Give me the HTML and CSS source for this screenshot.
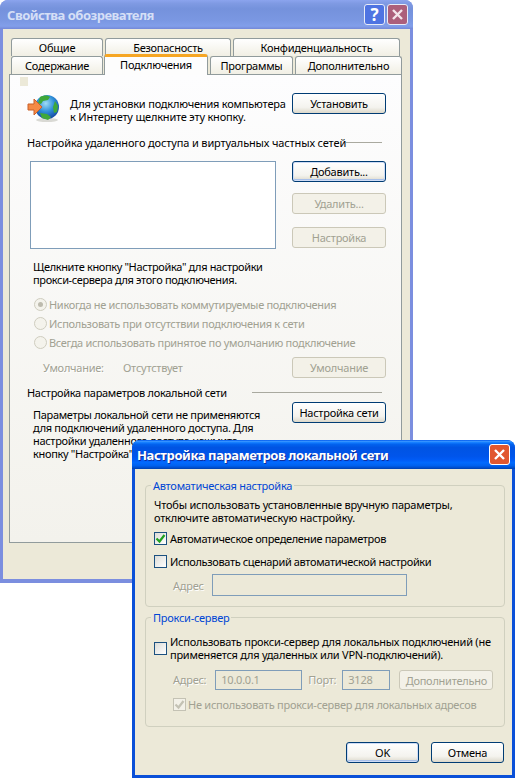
FILE: index.html
```html
<!DOCTYPE html>
<html lang="ru">
<head>
  <meta charset="UTF-8">
  <title>Свойства обозревателя</title>
  <link rel="stylesheet" href="styles.css">
</head>
<body>

<!-- Задний диалог -->
<div class="window back-window">
  <div class="titlebar">
    <span class="title">Свойства обозревателя</span>
    <span class="cap-btn cap-help">?</span>
    <span class="cap-btn cap-close">
      <svg width="13" height="13" viewBox="0 0 13 13"><path d="M2 2l9 9M11 2l-9 9" stroke="#f3e4ea" stroke-width="2.4"/></svg>
    </span>
  </div>
  <div class="back-body">
    <div class="tab-row">
      <div class="tab w-92">Общие</div>
      <div class="tab w-126">Безопасность</div>
      <div class="tab w-167">Конфиденциальность</div>
    </div>
    <div class="tab-row tab-row-front">
      <div class="tab w-92">Содержание</div>
      <div class="tab tab-active">Подключения</div>
      <div class="tab w-83">Программы</div>
      <div class="tab w-107">Дополнительно</div>
    </div>
    <div class="page">
      <span class="page-mark"></span>

      <div class="row install-row">
        <svg class="globe" width="33" height="28" viewBox="0 0 33 28">
          <defs>
            <radialGradient id="sea" cx="45%" cy="35%" r="70%">
              <stop offset="0" stop-color="#9fdcf5"/>
              <stop offset="0.5" stop-color="#2f8fd8"/>
              <stop offset="1" stop-color="#123f9c"/>
            </radialGradient>
          </defs>
          <ellipse cx="20" cy="26" rx="11" ry="2" fill="#d9d9d4"/>
          <circle cx="20" cy="13" r="12" fill="url(#sea)"/>
          <path d="M13 3c4-2 8-2 10 0l-2 3-5 1-2 3-3-1zM28 7l3 5-1 6-3 1-1-6zM13 19l7 1 4 3-3 3-6-2z" fill="#3fa83a"/>
          <path d="M1 10h6V5l8 8-8 8v-5H1z" fill="#f58a45" stroke="#c9602a"/>
        </svg>
        <p class="install-text">Для установки подключения компьютера<br>к Интернету щелкните эту кнопку.</p>
        <button class="btn btn-main">Установить</button>
      </div>

      <div class="heading heading-dial"><span>Настройка удаленного доступа и виртуальных частных сетей</span><i></i></div>

      <div class="row dial-row">
        <div class="listbox"></div>
        <div class="btn-col">
          <button class="btn btn-default">Добавить...</button>
          <button class="btn btn-off">Удалить...</button>
          <button class="btn btn-off">Настройка</button>
        </div>
      </div>

      <p class="hint">Щелкните кнопку "Настройка" для настройки<br>прокси-сервера для этого подключения.</p>

      <div class="radio-row radio-first"><span class="radio radio-on"></span>Никогда не использовать коммутируемые подключения</div>
      <div class="radio-row"><span class="radio"></span>Использовать при отсутствии подключения к сети</div>
      <div class="radio-row"><span class="radio"></span>Всегда использовать принятое по умолчанию подключение</div>

      <div class="row default-row">
        <span class="off-label">Умолчание:</span>
        <span class="off-value">Отсутствует</span>
        <button class="btn btn-off">Умолчание</button>
      </div>

      <div class="heading heading-lan"><span>Настройка параметров локальной сети</span><i></i></div>

      <div class="row lan-row">
        <p class="lan-text">Параметры локальной сети не применяются<br>для подключений удаленного доступа. Для<br>настройки удаленного доступа нажмите<br>кнопку "Настройка" выше.</p>
        <button class="btn btn-main">Настройка сети</button>
      </div>
    </div>
  </div>
</div>

<!-- Передний диалог -->
<div class="window front-window">
  <div class="titlebar">
    <span class="title">Настройка параметров локальной сети</span>
    <span class="cap-btn cap-close">
      <svg width="13" height="13" viewBox="0 0 13 13"><path d="M2 2l9 9M11 2l-9 9" stroke="#fff" stroke-width="2.4"/></svg>
    </span>
  </div>
  <div class="front-body">
    <fieldset class="group group-auto">
      <legend>Автоматическая настройка</legend>
      <p class="group-text">Чтобы использовать установленные вручную параметры,<br>отключите автоматическую настройку.</p>
      <div class="check-row check-first">
        <span class="check">
          <svg width="11" height="11" viewBox="0 0 11 11"><path d="M1.5 5.5l3 3 5-6.5" fill="none" stroke="#21a121" stroke-width="2.2"/></svg>
        </span>Автоматическое определение параметров
      </div>
      <div class="check-row check-second"><span class="check"></span>Использовать сценарий автоматической настройки</div>
      <div class="address-row">
        <span class="off-label">Адрес</span>
        <span class="field field-address"></span>
      </div>
    </fieldset>

    <fieldset class="group group-proxy">
      <legend>Прокси-сервер</legend>
      <div class="check-row proxy-check">
        <span class="check"></span>
        <span>Использовать прокси-сервер для локальных подключений (не<br>применяется для удаленных или VPN-подключений).</span>
      </div>
      <div class="proxy-row">
        <span class="off-label">Адрес:</span>
        <span class="field field-host">10.0.0.1</span>
        <span class="off-label">Порт:</span>
        <span class="field field-port">3128</span>
        <button class="btn btn-off btn-more">Дополнительно</button>
      </div>
      <div class="check-row bypass-row">
        <span class="check check-off">
          <svg width="11" height="11" viewBox="0 0 11 11"><path d="M1.5 5.5l3 3 5-6.5" fill="none" stroke="#c4c2b4" stroke-width="2.2"/></svg>
        </span>Не использовать прокси-сервер для локальных адресов
      </div>
    </fieldset>

    <div class="actions">
      <button class="btn btn-default btn-ok">OK</button>
      <button class="btn btn-main btn-ok">Отмена</button>
    </div>
  </div>
</div>

</body>
</html>
```

FILE: styles.css
```css
body {
  margin: 0;
  width: 516px;
  height: 779px;
  overflow: hidden;
  background: #fff;
  position: relative;
  font-family: "Noto Sans", Tahoma, sans-serif;
  font-size: 11px;
  line-height: 13px;
  letter-spacing: -0.25px;
  white-space: nowrap;
  color: #000;
}

p {
  margin: 0;
}

/* Окна */
.window {
  position: absolute;
  box-sizing: border-box;
  border-radius: 8px 8px 0 0;
  display: flex;
  flex-direction: column;
}

.back-window {
  left: 0;
  top: 0;
  width: 413px;
  height: 583px;
  background: #7b8edf;
}

.front-window {
  left: 132px;
  top: 440px;
  width: 383px;
  height: 338px;
  background: #0a50d8;
}

.titlebar {
  display: flex;
  align-items: center;
  gap: 2px;
  flex: none;
  height: 29px;
  padding: 0 5px 0 7px;
  border-radius: 8px 8px 0 0;
  box-sizing: border-box;
}

.back-window .titlebar {
  background: linear-gradient(#8ba4ee 0, #7f9ae3 12%, #7592dc 30%, #7a97e2 70%, #829fea 90%, #7388d8 100%);
}

.front-window .titlebar {
  background: linear-gradient(#0058ee 0, #3593ff 5%, #127dff 9%, #0262ee 15%, #0054e3 26%, #0055eb 56%, #005bf5 68%, #026afe 78%, #0062ef 88%, #0052d6 94%, #0040ab 100%);
  padding: 2px 5px 0 5px;
}

.title {
  flex: 1;
  font-size: 13px;
  font-weight: bold;
  letter-spacing: -0.4px;
}

.back-window .title {
  color: #d5dff6;
  letter-spacing: -0.5px;
  padding-top: 2px;
}

.front-window .title {
  color: #fff;
  text-shadow: 1px 1px 0 #0f2f9c;
}

.cap-btn {
  width: 21px;
  height: 21px;
  box-sizing: border-box;
  border: 1px solid #e8ecf8;
  border-radius: 3px;
  display: flex;
  align-items: center;
  justify-content: center;
}

.cap-help {
  background: #4f74e2;
  color: #fff;
  font-size: 17px;
  font-weight: bold;
}

.back-window .cap-close {
  background: #ac5f7b;
}

.front-window .cap-close {
  background: #e1572f;
  border-color: #fff;
  margin-top: -3px;
}

.back-body {
  flex: 1;
  margin: 0 3px 4px;
  padding: 9px 8px 0 6px;
  background: #ece9d8;
}

/* Вкладки */
.tab-row {
  display: flex;
  gap: 2px;
  padding-left: 2px;
  height: 18px;
}

.tab-row-front {
  align-items: flex-end;
  gap: 1px;
  position: relative;
  z-index: 1;
}

.tab {
  box-sizing: border-box;
  height: 18px;
  border: 1px solid #919b9c;
  border-bottom: 0;
  border-radius: 3px 3px 0 0;
  background: linear-gradient(#fff, #f1efe4);
  text-align: center;
  line-height: 18px;
}

.w-92 { width: 92px; }
.w-126 { width: 126px; }
.w-167 { width: 167px; }
.w-83 { width: 83px; margin-left: 1px; }
.w-107 { width: 107px; margin-left: 1px; }

.tab-active {
  width: 104px;
  height: 21px;
  margin-bottom: -1px;
  border-top: 3px solid #f6a623;
  background: #fdfdfd;
  line-height: 15px;
}

.page {
  box-sizing: border-box;
  position: relative;
  height: 469px;
  border: 1px solid #919b9c;
  background: linear-gradient(#fdfdfe, #f3f2ec);
  padding: 18px 0 0 17px;
}

.page-mark {
  position: absolute;
  left: 10px;
  top: 2px;
  width: 8px;
  height: 9px;
  background: #ece9d8;
}

.row {
  display: flex;
}

.install-row {
  height: 26px;
}

.globe {
  flex: none;
  margin-top: 1px;
}

.install-text {
  flex: none;
  width: 222px;
  margin: 4px 0 0 10px;
  letter-spacing: -0.2px;
}

.heading {
  display: flex;
  align-items: center;
  height: 13px;
}

.heading i {
  height: 1px;
  background: #a9a99f;
}

.heading-dial {
  margin-top: 17px;
}

.heading-dial span {
  width: 319px;
  letter-spacing: -0.14px;
}

.heading-dial i {
  width: 36px;
}

.heading-lan {
  margin-top: 8px;
}

.heading-lan span {
  width: 225px;
  letter-spacing: -0.3px;
}

.heading-lan i {
  width: 130px;
}

.dial-row {
  margin: 12px 0 0 3px;
  height: 88px;
}

.listbox {
  width: 246px;
  height: 88px;
  box-sizing: border-box;
  border: 1px solid #7f9db9;
  background: #fff;
}

.btn-col {
  margin: 0 0 0 16px;
  display: flex;
  flex-direction: column;
  gap: 11px;
}

.btn-col .btn-off:last-child {
  margin-top: 2px;
}

/* Кнопки */
.btn {
  flex: none;
  width: 94px;
  height: 21px;
  padding: 0;
  box-sizing: border-box;
  border: 1px solid #003c74;
  border-radius: 3px;
  background: linear-gradient(#fff, #f4f3ee 70%, #dcd8ca);
  font: inherit;
  letter-spacing: inherit;
  color: #000;
}

.btn-default {
  box-shadow: inset 0 0 0 1px #cfdcf5, inset 0 -1px 0 1px #a8c0ea;
}

.btn-off {
  border-color: #cbc8b8;
  background: #f3f1e8;
  color: #a1a192;
}

.btn-more {
  margin-left: 9px;
}

/* Переключатели */
.hint {
  margin: 11px 0 0 6px;
  letter-spacing: -0.36px;
}

.radio-row {
  display: flex;
  align-items: center;
  height: 19px;
  margin-left: 7px;
  letter-spacing: -0.3px;
  color: #a1a192;
}

.radio-first {
  margin-top: 9px;
}

.radio {
  flex: none;
  width: 13px;
  height: 13px;
  box-sizing: border-box;
  margin-right: 2px;
  border: 1px solid #cfcdbf;
  border-radius: 50%;
  background: #f4f3ec;
  display: flex;
  align-items: center;
  justify-content: center;
}

.radio-on::after {
  content: "";
  width: 5px;
  height: 5px;
  border-radius: 50%;
  background: #bdbbae;
}

.default-row {
  align-items: center;
  margin: 5px 0 0 16px;
  height: 21px;
  color: #a1a192;
}

.off-label {
  color: #a1a192;
  text-shadow: 1px 1px 0 #fff;
}

.off-value {
  margin-left: 21px;
  width: 169px;
}

.default-row .off-label {
  width: 59px;
}

.lan-row {
  margin: 3px 0 0 6px;
}

.lan-text {
  flex: none;
  width: 259px;
  margin-top: 6px;
  letter-spacing: -0.32px;
}

/* Передний диалог */
.front-body {
  flex: 1;
  margin: 0 3px 3px;
  background: #ece9d8;
  padding-top: 10px;
}

.group {
  box-sizing: border-box;
  width: 360px;
  margin: 0 0 0 10px;
  padding: 0;
  border: 1px solid #d0d0bf;
  border-radius: 4px;
}

.group legend {
  margin-left: 5px;
  padding: 0 2px;
  color: #0046d5;
}

.group-auto {
  height: 128px;
}

.group-proxy {
  height: 116px;
  margin-top: 4px;
}

.group-text {
  margin: 6px 0 0 8px;
  letter-spacing: -0.21px;
}

.check-row {
  display: flex;
  align-items: center;
  margin-left: 8px;
}

.check-first {
  margin-top: 7px;
  height: 14px;
  letter-spacing: -0.33px;
}

.check-second {
  margin-top: 9px;
  height: 14px;
  letter-spacing: -0.36px;
}

.check {
  flex: none;
  width: 13px;
  height: 13px;
  box-sizing: border-box;
  margin-right: 3px;
  border: 1px solid #1c5180;
  background: linear-gradient(135deg, #dcdcd7, #fff);
  display: flex;
  align-items: center;
  justify-content: center;
}

.check-off {
  border-color: #c4c2b4;
  background: #f3f1e8;
  margin-right: 2px;
}

.address-row {
  display: flex;
  align-items: center;
  margin: 6px 0 0 27px;
}

.address-row .off-label {
  width: 39px;
}

.field {
  box-sizing: border-box;
  border: 1px solid #7f9db9;
  color: #a1a192;
  display: block;
}

.field-address {
  width: 195px;
  height: 22px;
}

.proxy-check {
  margin-top: 11px;
}

.proxy-row {
  display: flex;
  align-items: center;
  margin: 8px 0 0 27px;
  height: 21px;
}

.field-host {
  width: 87px;
  height: 20px;
  margin: 0 6px 0 9px;
  padding-left: 5px;
  line-height: 18px;
}

.field-port {
  width: 48px;
  height: 20px;
  margin-left: 6px;
  padding-left: 5px;
  line-height: 18px;
}

.proxy-row .btn-more {
  height: 20px;
  margin-top: 1px;
}

.bypass-row {
  margin: 8px 0 0 27px;
  color: #a1a192;
}

.actions {
  display: flex;
  justify-content: flex-end;
  gap: 12px;
  margin: 15px 8px 0 0;
}

.btn-ok {
  width: 73px;
  height: 21px;
}
```
